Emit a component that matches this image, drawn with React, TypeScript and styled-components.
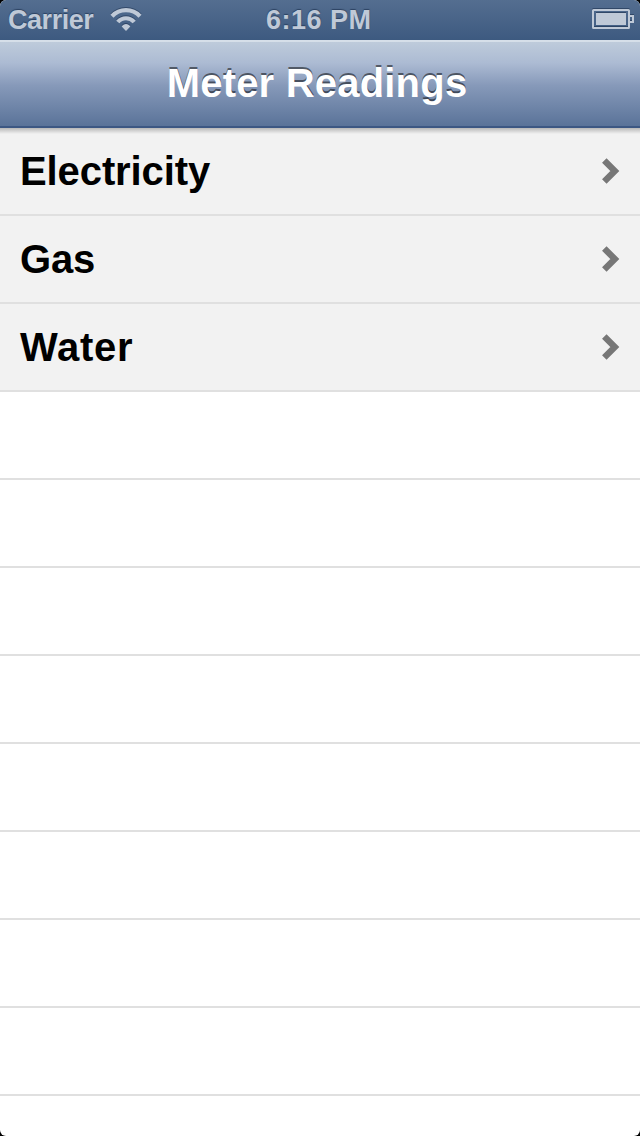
import React from "react";
import styled, { createGlobalStyle } from "styled-components";

const GlobalStyle = createGlobalStyle`
  html, body { margin: 0; padding: 0; background: #000; }
  * { box-sizing: border-box; }
`;

const Screen = styled.div`
  width: 640px;
  height: 1136px;
  overflow: hidden;
  display: flex;
  flex-direction: column;
  background: #fff;
  border-radius: 6px;
  font-family: "Liberation Sans", Arial, sans-serif;
  font-weight: bold;
`;

const StatusBar = styled.header`
  flex: none;
  height: 40px;
  display: grid;
  grid-template-columns: 1fr auto 1fr;
  align-items: center;
  padding: 0 6px 0 8px;
  background: linear-gradient(#546e90, #3d5a80);
  color: #bfc9d7;
  line-height: 40px;
  text-shadow: 0 -1px 1px rgba(30, 50, 80, 0.7);
`;

const Signal = styled.div`
  display: flex;
  align-items: center;
  gap: 16px;
`;

const StatusText = styled.span<{ $width: number; $tracking: number }>`
  width: ${(p) => p.$width}px;
  font-size: 27px;
  letter-spacing: ${(p) => p.$tracking}px;
  white-space: nowrap;
`;

const StatusIcon = styled.svg`
  display: block;
  overflow: visible;
  filter: drop-shadow(0 -1px 0.5px rgba(30, 50, 80, 0.6));
`;

const BatterySlot = styled.div`
  display: flex;
  justify-content: flex-end;
`;

const NavBar = styled.nav`
  flex: none;
  position: relative;
  z-index: 1;
  height: 88px;
  border-top: 2px solid #d6dfe9;
  border-bottom: 2px solid #3c5783;
  background: linear-gradient(#becbdb, #acbbd3 25%, #8699b9 52%, #5a7399);
  display: flex;
  justify-content: center;

  &::after {
    content: "";
    position: absolute;
    top: 86px;
    left: 0;
    right: 0;
    height: 6px;
    background: linear-gradient(rgba(0, 0, 0, 0.24), rgba(0, 0, 0, 0));
  }
`;

const Title = styled.h1`
  margin: 0;
  padding-right: 6px;
  font-size: 40px;
  line-height: 82px;
  letter-spacing: 0.2px;
  color: #fff;
  text-shadow: 0 -2px 0 rgba(0, 0, 0, 0.5);
`;

const Table = styled.ul`
  flex: 1;
  margin: 0;
  padding: 0;
  list-style: none;
`;

const Row = styled.li<{ $filled?: boolean }>`
  height: 88px;
  padding: 0 20px;
  border-bottom: 2px solid #e0e0e0;
  background: ${(p) => (p.$filled ? "#f2f2f2" : "#fff")};
  display: flex;
  align-items: center;
  justify-content: space-between;
`;

const Label = styled.span<{ $tracking: number }>`
  font-size: 40px;
  line-height: 86px;
  letter-spacing: ${(p) => p.$tracking}px;
  color: #000;
`;

const Wifi = () => (
  <StatusIcon width="32" height="24" viewBox="0 0 32 24">
    <g fill="none" stroke="#bfc9d7" strokeWidth="4.2">
      <path d="M2 8.2a19.3 19.3 0 0 1 28 0" />
      <path d="M7.8 14a10.8 10.8 0 0 1 16.4 0" />
    </g>
    <path d="M11.7 18.5a5 5 0 0 1 8.6 0L16 23z" fill="#bfc9d7" />
  </StatusIcon>
);

const Battery = () => (
  <StatusIcon width="42" height="20" viewBox="0 0 42 20">
    <rect x="1" y="0" width="36" height="18" rx="0.5" fill="none" stroke="#bfc9d7" strokeWidth="2" />
    <rect x="4" y="3" width="30" height="12" fill="#bfc9d7" />
    <path d="M38 6h3v6h-3" fill="none" stroke="#bfc9d7" strokeWidth="2" />
  </StatusIcon>
);

const Chevron = () => (
  <svg width="20" height="28" viewBox="0 0 20 28">
    <path d="M4.3 3.5L14.8 14 4.3 24.5" fill="none" stroke="#777" strokeWidth="6.4" />
  </svg>
);

const meters = [
  { name: "Electricity", tracking: -0.1 },
  { name: "Gas", tracking: -0.2 },
  { name: "Water", tracking: 0.7 },
];
const emptyRows = 8;

export default function App() {
  return (
    <>
      <GlobalStyle />
      <Screen>
        <StatusBar>
          <Signal>
            <StatusText $width={86} $tracking={-0.45}>Carrier</StatusText>
            <Wifi />
          </Signal>
          <StatusText $width={110} $tracking={0.5}>6:16 PM</StatusText>
          <BatterySlot>
            <Battery />
          </BatterySlot>
        </StatusBar>
        <NavBar>
          <Title>Meter Readings</Title>
        </NavBar>
        <Table>
          {meters.map(({ name, tracking }) => (
            <Row key={name} $filled>
              <Label $tracking={tracking}>{name}</Label>
              <Chevron />
            </Row>
          ))}
          {Array.from({ length: emptyRows }, (_, i) => (
            <Row key={i} />
          ))}
        </Table>
      </Screen>
    </>
  );
}
